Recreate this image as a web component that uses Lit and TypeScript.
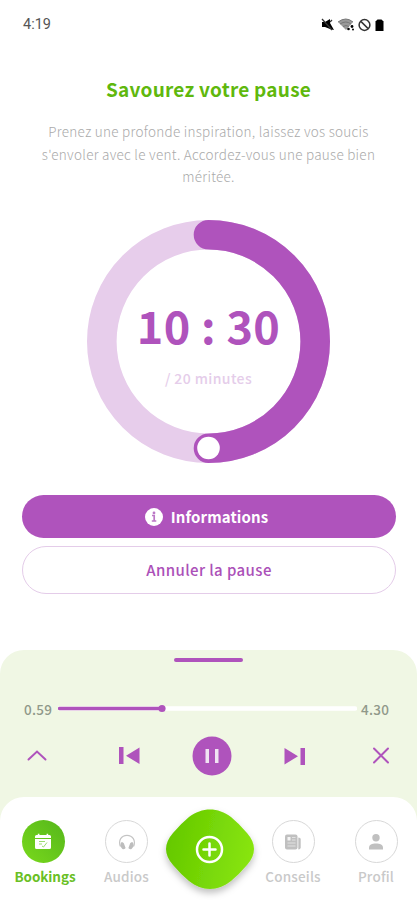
import { LitElement, html, css, svg } from "lit";
import { customElement } from "lit/decorators.js";

const calendarIcon = svg`<svg width="18" height="18" viewBox="0 0 18 18"><path fill="#fff" d="M2.500 2h1.300V.8h1.600V2h7.200V.8h1.600V2h1.300q1.500 0 1.500 1.500V5H1V3.500Q1 2 2.500 2ZM1 6h16v8.500q0 1.500-1.500 1.500h-13Q1 16 1 14.500Z"/><path fill="none" stroke="#9bdc70" stroke-width="1" d="M5 8.500h6M5 11h3M8 13l1.500 1L13 9.500"/></svg>`;
const headphonesIcon = svg`<svg width="18" height="18" viewBox="0 0 18 18"><path fill="none" stroke="#c4c4c4" stroke-width="1.200" d="M2.500 13.500C-.2 7.500 3.500 2.300 9 2.300S18.200 7.500 15.500 13.500"/><path fill="#bdbdbd" d="M3 9.500c1.500-.6 2.500 0 3 1.200l1.500 4c.3 1-2 1.900-3 1.200C2.800 14.600 1.800 12.500 3 9.500ZM15 9.500c-1.500-.6-2.500 0-3 1.200l-1.500 4c-.3 1 2 1.900 3 1.200 1.700-1.300 2.700-3.400 1.500-6.400Z"/></svg>`;
const newsIcon = svg`<svg width="18" height="18" viewBox="0 0 18 18"><rect x="1" y="1.500" width="12.500" height="15" rx="2" fill="#c0c0c0"/><path fill="#c0c0c0" d="M14.300 4.500q2.400 0 2.400 1.500v8.500q0 2-2.400 2Z"/><path stroke="#e2e2e2" fill="none" d="M8 4.500h3.500M8 7h3.500M3.500 10h8M3.500 13h8"/><rect x="3.500" y="4" width="3" height="3.500" fill="#f4f4f4"/></svg>`;
const personIcon = svg`<svg width="18" height="18" viewBox="0 0 18 18"><circle cx="9" cy="4.800" r="3.700" fill="#c0c0c0"/><path fill="#c0c0c0" d="M2 16.400v-1.500C2 11.500 5 10.400 9 10.400s7 1.100 7 4.500v1.500Z"/></svg>`;

@customElement("app-root")
export class AppRoot extends LitElement {
  static styles = css`
    :host {
      display: flex;
      flex-direction: column;
      box-sizing: border-box;
      width: 417px;
      height: 900px;
      overflow: hidden;
      background: #fff;
      font-family: "Noto Sans CJK SC", "Noto Sans", sans-serif;
      color: #af53bc;
    }
    svg { display: block; flex: none; }
    .status {
      height: 50px;
      box-sizing: border-box;
      padding: 0 32px 0 23px;
      display: flex;
      align-items: center;
      justify-content: space-between;
      color: #555;
      font: 14.500px/20px Roboto, sans-serif;
    }
    .status span { margin-top: -1px; }
    h1 {
      margin: 24px 0 0;
      font-size: 19px;
      line-height: 30px;
      font-weight: 700;
      text-align: center;
      color: #5fb80d;
      letter-spacing: 0.25px;
    }
    .intro {
      margin: 16px 0 0;
      height: 67px;
      text-align: center;
      font-size: 13.500px;
      line-height: 22.500px;
      font-weight: 300;
      color: #aaa;
      letter-spacing: 0.27px;
      white-space: nowrap;
    }
    .timer {
      display: grid;
      width: 243px;
      height: 243px;
      margin: 33px 0 0 87px;
    }
    .timer > * { grid-area: 1 / 1; }
    .readout {
      display: flex;
      flex-direction: column;
      align-items: center;
      padding-top: 75px;
    }
    .time { font-size: 45px; line-height: 60px; font-weight: 700; white-space: pre; letter-spacing: .3px; }
    .total { margin-top: 13px; font-size: 14px; line-height: 20px; font-weight: 500; color: #e5cdea; letter-spacing: .4px; }
    .actions { display: flex; flex-direction: column; gap: 8px; padding: 32px 21px 0 22px; }
    .btn {
      display: flex;
      align-items: center;
      justify-content: center;
      gap: 8px;
      box-sizing: border-box;
      height: 43px;
      padding: 0 5px 0 0;
      border: 0;
      border-radius: 24px;
      background: #af53bc;
      color: #fff;
      font: 700 15px/22px "Noto Sans CJK SC", sans-serif;
      letter-spacing: .1px;
    }
    .outline {
      height: 48px;
      padding: 0;
      background: #fff;
      border: 1.500px solid #e4cce9;
      color: #ab50b8;
      font-weight: 500;
      letter-spacing: .4px;
    }
    .player {
      margin-top: 56px;
      height: 250px;
      flex: none;
      background: #f0f7e4;
      border-radius: 24px 24px 0 0;
      display: flex;
      flex-direction: column;
      align-items: center;
    }
    .player > * { flex: none; }
    .handle { width: 69px; height: 4px; margin-top: 8px; border-radius: 2px; background: #af53bc; }
    .progress {
      box-sizing: border-box;
      align-self: stretch;
      display: flex;
      align-items: center;
      height: 21px;
      margin-top: 36px;
      padding: 0 27px 0 24px;
      color: #90998a;
      font-size: 13.500px;
      line-height: 20px;
      letter-spacing: .3px;
      font-weight: 500;
    }
    .elapsed { width: 34px; }
    .track { width: 299px; margin-right: 4px; }
    .remaining { width: 29px; }
    .controls {
      align-self: stretch;
      display: grid;
      grid-template-columns: 30px 140px 40px 126px 46px;
      justify-items: center;
      align-items: center;
      height: 40px;
      margin-top: 17px;
      padding: 0 13px 0 22px;
    }
    .previous { margin-left: 14px; }
    .nav {
      align-self: stretch;
      margin-top: 21px;
      height: 103px;
      border-radius: 24px 24px 0 0;
      background: #fff;
      display: grid;
      grid-template-columns: 86px 81px 84px 84px 82px;
    }
    .item {
      display: flex;
      flex-direction: column;
      align-items: center;
      padding-top: 23px;
      font-size: 13.500px;
      line-height: 20px;
      font-weight: 500;
      color: #c9c9c9;
      letter-spacing: .2px;
      white-space: nowrap;
    }
    .badge {
      width: 43px;
      height: 43px;
      box-sizing: border-box;
      border: 1.500px solid #d8d8d8;
      border-radius: 50%;
      display: grid;
      place-items: center;
      margin-bottom: 3px;
    }
    .active { color: #6abf25; font-weight: 700; letter-spacing: -.1px; }
    .active span { padding-left: 4px; }
    .active .badge { border: 0; background: linear-gradient(45deg, #79d91c, #55b61b); }
    .add { justify-self: center; margin-top: 3px; }
  `;

  private item(label: string, icon: unknown, active = false) {
    return html`<div class="item ${active ? "active" : ""}"><div class="badge">${icon}</div><span>${label}</span></div>`;
  }

  render() {
    return html`
      <div class="status">
        <span>4:19</span>
        <svg width="65" height="16" viewBox="0 0 65 16">
          <path d="M2 5h3l5-3v4l4 7-4-1-5-2H2Z"/>
          <path d="M2 2l10 11M10 5l2-2" stroke="#333" stroke-width="1.300"/>
          <path d="M18 5q8-6 15 0l-7 8Z" fill="#999"/>
          <path d="M18 5q8-6 15 0M20 7q6-4 11 0M23 9.500q3-2 6 0" fill="none" stroke="#777"/>
          <circle cx="28.500" cy="12" r="1.300"/><circle cx="32" cy="9.500" r="1.400"/><circle cx="33" cy="12.500" r="1"/>
          <circle cx="44.500" cy="8" r="5.400" fill="none" stroke="#333" stroke-width="1.500"/>
          <path d="M41 4.500l7 7" stroke="#333" stroke-width="1.700"/>
          <path d="M55.500 4.500l2-2h4l2 2V14h-8Z"/>
        </svg>
      </div>
      <h1>Savourez votre pause</h1>
      <p class="intro">
        Prenez une profonde inspiration, laissez vos soucis<br />s'envoler avec le vent. Accordez-vous une pause bien<br />méritée.
      </p>
      <div class="timer">
        <svg width="243" height="243" viewBox="0 0 243 243" fill="none">
          <circle cx="121.500" cy="121.500" r="106.700" stroke="#e7cdeb" stroke-width="29.600"/>
          <path d="M121.500 14.800a106.700 106.700 0 0 1 0 213.400" stroke="#af53bc" stroke-width="29.600" stroke-linecap="round"/>
          <circle cx="121.500" cy="228" r="11.300" fill="#fff"/>
        </svg>
        <div class="readout"><div class="time">10 : 30</div><div class="total">/ 20 minutes</div></div>
      </div>
      <div class="actions">
        <button class="btn">
          <svg width="18" height="18" viewBox="0 0 18 18"><circle cx="9" cy="9" r="9" fill="#fff"/><circle cx="9" cy="4.900" r="1.400" fill="#bc78c6"/><path d="M7 7.500h2.200v5.200M6.800 13h4.500" fill="none" stroke="#bc78c6" stroke-width="1.700"/></svg>
          <span>Informations</span>
        </button>
        <button class="btn outline">Annuler la pause</button>
      </div>
      <div class="player">
        <div class="handle"></div>
        <div class="progress">
          <span class="elapsed">0.59</span>
          <svg class="track" width="299" height="13" viewBox="0 0 299 13" stroke-linecap="round">
            <path d="M2 6.500h295" stroke="#fff" stroke-width="4.500"/>
            <path d="M1.500 6.500h102" stroke="#af53bc" stroke-width="3.500"/>
            <circle cx="104" cy="6.500" r="3.600" fill="#af53bc"/>
          </svg>
          <span class="remaining">4.30</span>
        </div>
        <div class="controls">
          <svg width="22" height="22" viewBox="0 0 22 22"><path d="M2.500 14.500l8.500-8 8.500 8" fill="none" stroke="#af53bc" stroke-width="2" stroke-linecap="round"/></svg>
          <svg class="previous" width="22" height="20" viewBox="0 0 22 20" fill="#af53bc"><path d="M1 1h4.500v17H1ZM21.500 1.500v16.500L8 9.800Z"/></svg>
          <svg width="40" height="40" viewBox="0 0 40 40"><circle cx="20" cy="20" r="19.500" fill="#af53bc"/><path d="M13.500 13h3.500v14h-3.500ZM23 13h3.500v14H23Z" fill="#f0e2f2"/></svg>
          <svg width="22" height="20" viewBox="0 0 22 20" fill="#af53bc"><path d="M.5 2v16.500L14 10.200ZM16.500 2H21v17h-4.500Z"/></svg>
          <svg width="18" height="18" viewBox="0 0 18 18"><path d="M2 1.500l14 14M16 1.500L2 15.500" stroke="#af53bc" stroke-width="2" stroke-linecap="round"/></svg>
        </div>
        <div class="nav">
          ${this.item("Bookings", calendarIcon, true)}
          ${this.item("Audios", headphonesIcon)}
          <svg class="add" width="108" height="100" viewBox="0 0 108 100">
            <defs>
              <linearGradient id="lime" x1="0" y1=".5" x2="1" y2=".7"><stop stop-color="#65c900"/><stop offset="1" stop-color="#8ae60f"/></linearGradient>
              <filter id="shade" x="-20%" y="-20%" width="140%" height="150%"><feDropShadow dx="0" dy="4" stdDeviation="3.500" flood-color="#000" flood-opacity=".25"/></filter>
            </defs>
            <path filter="url(#shade)" fill="url(#lime)" d="M34 17C47 7 63 7 76 17Q84 23.500 92 33Q106 49 92 65Q84 74.500 76 81C63 91.500 47 91.500 34 81Q26 74.500 18 65Q4 49 18 33Q26 23.500 34 17Z"/>
            <circle cx="54.500" cy="49.500" r="12.500" fill="none" stroke="#fff" stroke-width="2.500"/>
            <path d="M54.500 43.500v12M48.500 49.500h12" stroke="#fff" stroke-width="2.500" stroke-linecap="round"/>
          </svg>
          ${this.item("Conseils", newsIcon)}
          ${this.item("Profil", personIcon)}
        </div>
      </div>
    `;
  }
}
